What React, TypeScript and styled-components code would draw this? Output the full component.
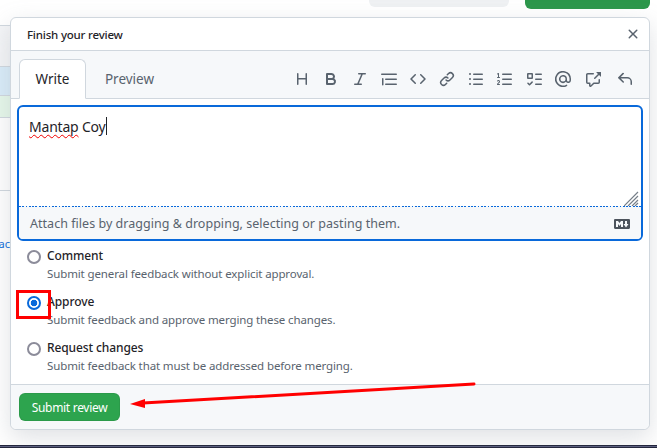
import styled, { createGlobalStyle } from "styled-components";

const GlobalStyle = createGlobalStyle`
  html, body {
    margin: 0;
    padding: 0;
    background: #ffffff;
  }
  body {
    font-family: "Noto Sans", "Open Sans", sans-serif;
    color: #1f2328;
  }
`;

const Page = styled.div`
  position: relative;
  width: 657px;
  height: 448px;
  overflow: hidden;
  background: #fff;
`;

const Backdrop = styled.div`
  width: 100%;
  height: 100%;
  display: flex;
  flex-direction: column;
`;

const TopBar = styled.div`
  height: 25px;
  display: flex;
  justify-content: flex-end;
  align-items: flex-start;
  gap: 16px;
  padding-right: 7px;
`;

const GhostPill = styled.div`
  width: 140px;
  height: 7px;
  background: #eff1f3;
  border-radius: 0 0 6px 6px;
`;

const GreenPill = styled.div`
  width: 125px;
  height: 9px;
  background: #2c974b;
  border-radius: 0 0 6px 6px;
`;

const SideColumn = styled.div`
  flex: 1;
  width: 10px;
  display: flex;
  flex-direction: column;
  border-top: 1px solid #d0d7de;
`;

const SideRow = styled.div<{ $h: number; $bg: string }>`
  height: ${(p) => p.$h}px;
  background: ${(p) => p.$bg};
  border-bottom: 1px solid #d0d7de;
  flex-shrink: 0;
`;

const SideLink = styled.div`
  height: 20px;
  margin-top: 43px;
  width: 10px;
  overflow: hidden;
  direction: rtl;
  font-size: 11px;
  line-height: 20px;
  color: #0969da;
  white-space: nowrap;
`;

const BottomStrip = styled.div`
  height: 1px;
  margin-top: auto;
  width: 657px;
  background: #5c5f80;
  border-top: 1px solid #20233a;
  border-bottom: 1px solid #20233a;
  flex-shrink: 0;
`;

const Dialog = styled.section`
  position: absolute;
  left: 10px;
  top: 17px;
  width: 640px;
  height: 413px;
  box-sizing: border-box;
  display: flex;
  flex-direction: column;
  background: #fff;
  border: 1px solid #d0d7de;
  border-radius: 6px;
  box-shadow: 0 8px 24px rgba(140, 149, 159, 0.28);
`;

const DialogHeader = styled.header`
  height: 33px;
  flex-shrink: 0;
  box-sizing: border-box;
  display: flex;
  justify-content: space-between;
  align-items: center;
  padding: 0 8px 0 16px;
  border-bottom: 1px solid #d0d7de;
`;

const DialogTitle = styled.h2`
  margin: 0;
  font-size: 11.5px;
  font-weight: 500;
  letter-spacing: -0.2px;
  color: #1f2328;
`;

const Octicon = styled.svg`
  width: 16px;
  height: 16px;
  fill: currentColor;
  display: block;
`;

const CloseButton = styled.span`
  display: flex;
  color: #59636e;
`;

const TabBar = styled.div`
  height: 48px;
  flex-shrink: 0;
  box-sizing: border-box;
  display: flex;
  align-items: flex-end;
  justify-content: space-between;
  padding-left: 8px;
  background: #f6f8fa;
  border-bottom: 1px solid #d0d7de;
`;

const Tabs = styled.div`
  display: flex;
  margin-bottom: -1px;
`;

const Tab = styled.div<{ $active?: boolean }>`
  width: 67px;
  height: 40px;
  box-sizing: border-box;
  display: flex;
  align-items: center;
  justify-content: center;
  font-size: 13.5px;
  border: 1px solid ${(p) => (p.$active ? "#d0d7de" : "transparent")};
  border-bottom-color: ${(p) => (p.$active ? "#fff" : "transparent")};
  border-radius: 6px 6px 0 0;
  background: ${(p) => (p.$active ? "#fff" : "transparent")};
  color: ${(p) => (p.$active ? "#1f2328" : "#59636e")};
  margin-right: 10px;
`;

const Toolbar = styled.div`
  display: flex;
  align-items: center;
  height: 39px;
  padding-right: 8px;
`;

const ToolButton = styled.span<{ $wide?: boolean }>`
  width: ${(p) => (p.$wide ? 32 : 29)}px;
  display: flex;
  justify-content: center;
  color: #59636e;
`;

const Editor = styled.div`
  flex-shrink: 0;
  margin: 6px 6px 0;
  height: 136px;
  box-sizing: border-box;
  display: flex;
  flex-direction: column;
  border: 2px solid #0969da;
  border-radius: 6px;
  overflow: hidden;
  position: relative;
`;

const WriteArea = styled.div`
  flex: 1;
  padding: 9px 10px 0;
  font-size: 14px;
  line-height: 22px;
  letter-spacing: -0.2px;
  color: #1f2328;
`;

const Misspelled = styled.span`
  text-decoration: underline wavy #f00000 1.1px;
  text-decoration-skip-ink: none;
  text-underline-offset: 2px;
`;

const Caret = styled.span`
  display: inline-block;
  width: 1px;
  height: 18px;
  background: #1f2328;
  vertical-align: -3px;
`;

const ResizeGrip = styled.svg`
  position: absolute;
  right: 2px;
  top: 84px;
`;

const AttachBar = styled.div`
  height: 33px;
  flex-shrink: 0;
  box-sizing: border-box;
  display: flex;
  align-items: center;
  justify-content: space-between;
  padding: 2px 11px 0 11px;
  background-color: #f6f8fa;
  background-image: repeating-linear-gradient(90deg, #0969da 0 1.8px, transparent 1.8px 3.3px);
  background-size: 100% 1px;
  background-repeat: no-repeat;
  font-size: 12.5px;
  letter-spacing: 0.03px;
  color: #59636e;
`;

const MarkdownBadge = styled.span`
  display: flex;
  color: #4c535c;
`;

const ReviewOptions = styled.div`
  flex: 1;
  display: flex;
  flex-direction: column;
  gap: 10px;
  padding: 6px 0 0 16px;
`;

const Option = styled.label`
  display: flex;
  gap: 6px;
`;

const Radio = styled.span<{ $checked?: boolean }>`
  width: 14px;
  height: 14px;
  margin-top: 3px;
  flex-shrink: 0;
  box-sizing: border-box;
  border-radius: 50%;
  border: 2px solid ${(p) => (p.$checked ? "#0969da" : "#8c8c9a")};
  background: ${(p) => (p.$checked ? "radial-gradient(circle, #0969da 0 3px, #fff 3.6px)" : "#fff")};
`;

const OptionText = styled.span`
  display: flex;
  flex-direction: column;
`;

const OptionTitle = styled.span`
  font-size: 12px;
  line-height: 18px;
  font-weight: 500;
  letter-spacing: -0.1px;
  color: #1f2328;
`;

const OptionHint = styled.span`
  font-size: 11.5px;
  line-height: 18px;
  letter-spacing: -0.12px;
  color: #59636e;
`;

const DialogFooter = styled.footer`
  height: 45px;
  flex-shrink: 0;
  box-sizing: border-box;
  display: flex;
  align-items: center;
  padding: 0 8px;
  background: #f6f8fa;
  border-top: 1px solid #d0d7de;
  border-radius: 0 0 6px 6px;
`;

const SubmitButton = styled.button`
  width: 101px;
  height: 28px;
  border: 1px solid rgba(31, 35, 40, 0.08);
  border-radius: 6px;
  background: #2da44e;
  color: #fff;
  font-family: inherit;
  font-size: 12px;
  letter-spacing: -0.3px;
  padding: 0;
`;

const RadioMarker = styled.div`
  position: absolute;
  left: 16px;
  top: 290px;
  width: 35px;
  height: 29px;
  box-sizing: border-box;
  border: 3px solid #ff0000;
`;

const ArrowMark = styled.svg`
  position: absolute;
  left: 125px;
  top: 378px;
`;

const paths = {
  heading:
    "M3.75 2a.75.75 0 0 1 .75.75V7h7V2.75a.75.75 0 0 1 1.5 0v10.5a.75.75 0 0 1-1.5 0V8.5h-7v4.75a.75.75 0 0 1-1.5 0V2.75A.75.75 0 0 1 3.75 2Z",
  bold: "M4 2h4.5a3.501 3.501 0 0 1 2.852 5.53A3.499 3.499 0 0 1 9.5 14H4a1 1 0 0 1-1-1V3a1 1 0 0 1 1-1Zm1 7v3h4.5a1.5 1.5 0 0 0 0-3Zm3.5-2a1.5 1.5 0 0 0 0-3H5v3Z",
  italic:
    "M6 2.75A.75.75 0 0 1 6.75 2h6.5a.75.75 0 0 1 0 1.5h-2.505l-3.858 9H9.25a.75.75 0 0 1 0 1.5h-6.5a.75.75 0 0 1 0-1.5h2.505l3.858-9H6.75A.75.75 0 0 1 6 2.75Z",
  quote:
    "M.75 2.5h14.5a.75.75 0 0 1 0 1.5H.75a.75.75 0 0 1 0-1.5Zm4 5h10.5a.75.75 0 0 1 0 1.5H4.75a.75.75 0 0 1 0-1.5Zm0 5h10.5a.75.75 0 0 1 0 1.5H4.75a.75.75 0 0 1 0-1.5ZM2.5 7.75v6a.75.75 0 0 1-1.5 0v-6a.75.75 0 0 1 1.5 0Z",
  code: "m11.28 3.22 4.25 4.25a.75.75 0 0 1 0 1.06l-4.25 4.25a.749.749 0 0 1-1.275-.326.749.749 0 0 1 .215-.734L13.94 8l-3.72-3.72a.749.749 0 0 1 .326-1.275.749.749 0 0 1 .734.215Zm-6.56 0a.751.751 0 0 1 1.042.018.751.751 0 0 1 .018 1.042L2.06 8l3.72 3.72a.749.749 0 0 1-.326 1.275.749.749 0 0 1-.734-.215L.47 8.53a.75.75 0 0 1 0-1.06Z",
  link: "m7.775 3.275 1.25-1.25a3.5 3.5 0 1 1 4.95 4.95l-2.5 2.5a3.5 3.5 0 0 1-4.95 0 .751.751 0 0 1 .018-1.042.751.751 0 0 1 1.042-.018 1.998 1.998 0 0 0 2.83 0l2.5-2.5a2.002 2.002 0 0 0-2.83-2.83l-1.25 1.25a.751.751 0 0 1-1.042-.018.751.751 0 0 1-.018-1.042Zm-4.69 9.64a1.998 1.998 0 0 0 2.83 0l1.25-1.25a.751.751 0 0 1 1.042.018.751.751 0 0 1 .018 1.042l-1.25 1.25a3.5 3.5 0 1 1-4.95-4.95l2.5-2.5a3.5 3.5 0 0 1 4.95 0 .751.751 0 0 1-.018 1.042.751.751 0 0 1-1.042.018 1.998 1.998 0 0 0-2.83 0l-2.5 2.5a1.998 1.998 0 0 0 0 2.83Z",
  listUnordered:
    "M5.75 2.5h8.5a.75.75 0 0 1 0 1.5h-8.5a.75.75 0 0 1 0-1.5Zm0 5h8.5a.75.75 0 0 1 0 1.5h-8.5a.75.75 0 0 1 0-1.5Zm0 5h8.5a.75.75 0 0 1 0 1.5h-8.5a.75.75 0 0 1 0-1.5ZM2 14a1 1 0 1 1 0-2 1 1 0 0 1 0 2Zm1-6a1 1 0 1 1-2 0 1 1 0 0 1 2 0ZM2 4a1 1 0 1 1 0-2 1 1 0 0 1 0 2Z",
  listOrdered:
    "M5 3.25a.75.75 0 0 1 .75-.75h8.5a.75.75 0 0 1 0 1.5h-8.5A.75.75 0 0 1 5 3.25Zm0 5a.75.75 0 0 1 .75-.75h8.5a.75.75 0 0 1 0 1.5h-8.5A.75.75 0 0 1 5 8.25Zm0 5a.75.75 0 0 1 .75-.75h8.5a.75.75 0 0 1 0 1.5h-8.5a.75.75 0 0 1-.75-.75ZM.924 10.32a.5.5 0 0 1-.851-.525l.001-.001.001-.002.002-.004.007-.011c.097-.144.215-.273.348-.384.228-.19.588-.392 1.068-.392.468 0 .858.181 1.126.484.259.294.377.673.377 1.038 0 .987-.686 1.495-1.156 1.845l-.047.035c-.303.225-.522.4-.654.597h1.357a.5.5 0 0 1 0 1H.5a.5.5 0 0 1-.5-.5c0-1.005.692-1.52 1.167-1.875l.035-.025c.531-.396.8-.625.8-1.078a.57.57 0 0 0-.128-.376C1.806 10.068 1.695 10 1.5 10a.658.658 0 0 0-.429.163.835.835 0 0 0-.144.153ZM2.003 2.5V6h.503a.5.5 0 0 1 0 1H.5a.5.5 0 0 1 0-1h.503V3.308l-.28.14a.5.5 0 0 1-.446-.895l1.003-.5a.5.5 0 0 1 .723.447Z",
  tasklist:
    "M2 2h4a1 1 0 0 1 1 1v4a1 1 0 0 1-1 1H2a1 1 0 0 1-1-1V3a1 1 0 0 1 1-1Zm4.655 8.595a.75.75 0 0 1 0 1.06L4.03 14.28a.75.75 0 0 1-1.06 0l-1.5-1.5a.749.749 0 0 1 .326-1.275.749.749 0 0 1 .734.215l.97.97 2.095-2.095a.75.75 0 0 1 1.06 0ZM9.75 2.5h5.5a.75.75 0 0 1 0 1.5h-5.5a.75.75 0 0 1 0-1.5Zm0 5h5.5a.75.75 0 0 1 0 1.5h-5.5a.75.75 0 0 1 0-1.5Zm0 5h5.5a.75.75 0 0 1 0 1.5h-5.5a.75.75 0 0 1 0-1.5Zm-7.25-9v3h3v-3Z",
  mention:
    "M4.75 2.37a6.501 6.501 0 0 0 6.5 11.26.75.75 0 0 1 .75 1.298A7.999 7.999 0 0 1 .989 4.148 8 8 0 0 1 16 7.75v1.5a2.75 2.75 0 0 1-5.072 1.475 3.999 3.999 0 0 1-6.65-4.19A4 4 0 0 1 12 8v1.25a1.25 1.25 0 0 0 2.5 0V7.867a6.5 6.5 0 0 0-9.75-5.496ZM10.5 8a2.5 2.5 0 1 0-5 0 2.5 2.5 0 0 0 5 0Z",
  crossReference:
    "M2.75 3.5a.25.25 0 0 0-.25.25v7.5c0 .138.112.25.25.25h2a.75.75 0 0 1 .75.75v2.19l2.72-2.72a.749.749 0 0 1 .53-.22h4.5a.25.25 0 0 0 .25-.25v-2.5a.75.75 0 0 1 1.5 0v2.5A1.75 1.75 0 0 1 13.25 13H9.06l-2.573 2.573A1.458 1.458 0 0 1 4 14.543V13H2.75A1.75 1.75 0 0 1 1 11.25v-7.5C1 2.784 1.784 2 2.75 2h5.5a.75.75 0 0 1 0 1.5ZM16 1.25v4.146a.25.25 0 0 1-.427.177L14.03 4.03l-3.75 3.75a.749.749 0 0 1-1.275-.326.749.749 0 0 1 .215-.734l3.75-3.75-1.543-1.543A.25.25 0 0 1 11.604 1h4.146a.25.25 0 0 1 .25.25Z",
  reply:
    "M6.78 1.97a.75.75 0 0 1 0 1.06L3.81 6h6.44A4.75 4.75 0 0 1 15 10.75v2.5a.75.75 0 0 1-1.5 0v-2.5a3.25 3.25 0 0 0-3.25-3.25H3.81l2.97 2.97a.749.749 0 0 1-.326 1.275.749.749 0 0 1-.734-.215L1.22 7.28a.75.75 0 0 1 0-1.06l4.25-4.25a.75.75 0 0 1 1.06 0Z",
  x: "M3.72 3.72a.75.75 0 0 1 1.06 0L8 6.94l3.22-3.22a.749.749 0 0 1 1.275.326.749.749 0 0 1-.215.734L9.06 8l3.22 3.22a.749.749 0 0 1-.326 1.275.749.749 0 0 1-.734-.215L8 9.06l-3.22 3.22a.751.751 0 0 1-1.042-.018.751.751 0 0 1-.018-1.042L6.94 8 3.72 4.78a.75.75 0 0 1 0-1.06Z",
  markdown:
    "M14.85 3c.63 0 1.15.52 1.14 1.15v7.7c0 .63-.51 1.15-1.15 1.15H1.15C.52 13 0 12.48 0 11.84V4.15C0 3.52.52 3 1.15 3ZM9 11V5H7L5.5 7 4 5H2v6h2V8l1.5 1.92L7 8v3Zm2.99.5L14.5 8H13V5h-2v3H9.5Z",
};

type IconName = keyof typeof paths;

const Icon = ({ name }: { name: IconName }) => (
  <Octicon viewBox="0 0 16 16">
    <path d={paths[name]} />
  </Octicon>
);

const tools: IconName[] = [
  "heading",
  "bold",
  "italic",
  "quote",
  "code",
  "link",
  "listUnordered",
  "listOrdered",
  "tasklist",
  "mention",
];

const options = [
  { title: "Comment", hint: "Submit general feedback without explicit approval." },
  { title: "Approve", hint: "Submit feedback and approve merging these changes.", checked: true },
  { title: "Request changes", hint: "Submit feedback that must be addressed before merging." },
];

export default function App() {
  return (
    <Page>
      <GlobalStyle />
      <Backdrop>
        <TopBar>
          <GhostPill />
          <GreenPill />
        </TopBar>
        <SideColumn>
          <SideRow $h={40} $bg="#f4f5f7" />
          <SideRow $h={28} $bg="#d9ecf9" />
          <SideRow $h={21} $bg="#e6f8ea" />
          <SideRow $h={72} $bg="#ffffff" />
          <SideLink>ac</SideLink>
          <BottomStrip />
        </SideColumn>
      </Backdrop>

      <Dialog>
        <DialogHeader>
          <DialogTitle>Finish your review</DialogTitle>
          <CloseButton>
            <Icon name="x" />
          </CloseButton>
        </DialogHeader>
        <TabBar>
          <Tabs>
            <Tab $active>Write</Tab>
            <Tab>Preview</Tab>
          </Tabs>
          <Toolbar>
            {tools.map((name) => (
              <ToolButton key={name}>
                <Icon name={name} />
              </ToolButton>
            ))}
            <ToolButton $wide>
              <Icon name="crossReference" />
            </ToolButton>
            <ToolButton $wide>
              <Icon name="reply" />
            </ToolButton>
          </Toolbar>
        </TabBar>
        <Editor>
          <WriteArea>
            <Misspelled>Mantap</Misspelled> Coy
            <Caret />
          </WriteArea>
          <ResizeGrip width="15" height="15" viewBox="0 0 15 15">
            <path d="M0 15L14 1M4 15L14 5M8 15L14 9M11 15L14 12" stroke="#767f89" strokeWidth="1.2" fill="none" />
          </ResizeGrip>
          <AttachBar>
            Attach files by dragging &amp; dropping, selecting or pasting them.
            <MarkdownBadge>
              <Icon name="markdown" />
            </MarkdownBadge>
          </AttachBar>
        </Editor>
        <ReviewOptions>
          {options.map((o) => (
            <Option key={o.title}>
              <Radio $checked={o.checked} />
              <OptionText>
                <OptionTitle>{o.title}</OptionTitle>
                <OptionHint>{o.hint}</OptionHint>
              </OptionText>
            </Option>
          ))}
        </ReviewOptions>
        <DialogFooter>
          <SubmitButton>Submit review</SubmitButton>
        </DialogFooter>
      </Dialog>

      <RadioMarker />
      <ArrowMark width="352" height="34" viewBox="0 0 352 34">
        <path d="M349 6L18 25" stroke="#ff0000" strokeWidth="3" strokeLinecap="round" fill="none" />
        <path d="M5 26L20 21L20 30Z" fill="#ff0000" />
      </ArrowMark>
    </Page>
  );
}
